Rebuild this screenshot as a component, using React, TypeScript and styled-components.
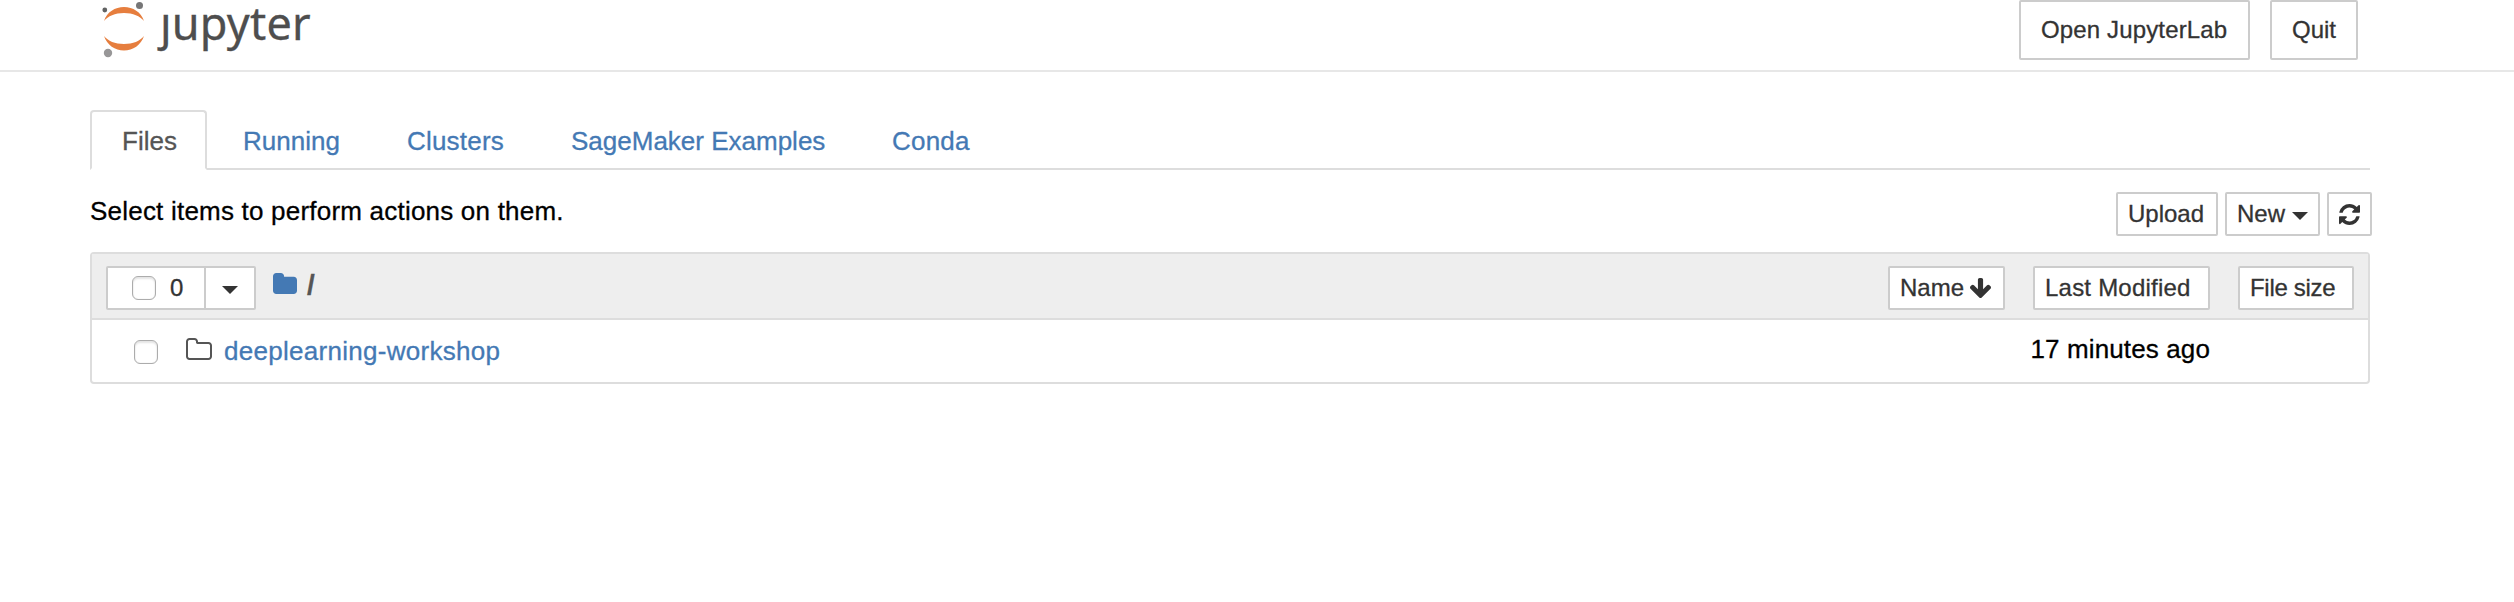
import React from "react";
import styled, { createGlobalStyle } from "styled-components";

const GlobalStyle = createGlobalStyle`
  * { box-sizing: border-box; }
  body {
    margin: 0;
    background: #fff;
    color: #000;
    font-family: "Liberation Sans", Helvetica, Arial, sans-serif;
    font-size: 26px;
    line-height: 36px;
    -webkit-text-stroke: 0.3px currentColor;
  }
  a { color: #4479b4; text-decoration: none; }
`;

const Header = styled.header`
  display: flex;
  justify-content: space-between;
  height: 72px;
  padding: 0 156px 0 102px;
  border-bottom: 2px solid #e7e7e7;
`;

const Brand = styled.a`
  display: flex;
  gap: 14px;
`;

const Wordmark = styled.span`
  font-family: "Noto Sans", "Open Sans", sans-serif;
  font-size: 45px;
  line-height: 46px;
  letter-spacing: 0.2px;
  color: #4e4e4e;
`;

const HeaderActions = styled.div`
  display: flex;
  gap: 20px;
`;

const Button = styled.button<{ $w: number; $h?: number; $track?: number }>`
  display: flex;
  align-items: center;
  flex: none;
  width: ${(p) => p.$w}px;
  height: ${(p) => p.$h ?? 44}px;
  padding: 0 0 0 10px;
  border: 2px solid #ccc;
  border-radius: 2px;
  background: #fff;
  color: #333;
  font: 24px/36px "Liberation Sans", Helvetica, Arial, sans-serif;
  letter-spacing: ${(p) => p.$track ?? 0}px;
  white-space: nowrap;
`;

const HeaderButton = styled(Button)`
  padding-left: 20px;
`;

const Main = styled.main`
  margin: 38px 144px 0 90px;
`;

const TabList = styled.nav`
  display: flex;
  gap: 4px;
  height: 60px;
  border-bottom: 2px solid #ddd;
`;

const Tab = styled.a<{ $w: number; $active?: boolean; $track?: number }>`
  width: ${(p) => p.$w}px;
  height: 60px;
  padding: 11px 0 0 30px;
  border: 2px solid ${(p) => (p.$active ? "#ddd" : "transparent")};
  border-bottom-color: ${(p) => (p.$active ? "#fff" : "transparent")};
  border-radius: 4px 4px 0 0;
  background: ${(p) => (p.$active ? "#fff" : "transparent")};
  letter-spacing: ${(p) => p.$track ?? 0}px;
  white-space: nowrap;
  && { color: ${(p) => (p.$active ? "#555" : "#4479b4")}; }
`;

const Toolbar = styled.div`
  display: flex;
  justify-content: space-between;
  height: 82px;
  margin-right: -2px;
  padding-top: 22px;
`;

const Hint = styled.span`
  margin-top: 1px;
  letter-spacing: 0.21px;
`;

const ToolbarButtons = styled.div`
  display: flex;
  gap: 7px;
`;

const Caret = styled.i<{ $gap?: number }>`
  margin: 4px 0 0 ${(p) => p.$gap ?? 0}px;
  border-top: 8px solid #333;
  border-left: 8px solid transparent;
  border-right: 8px solid transparent;
`;

const Listing = styled.section`
  border: 2px solid #ddd;
  border-radius: 4px;
`;

const ListHeader = styled.div`
  display: flex;
  justify-content: space-between;
  height: 66px;
  padding: 12px 14px 0;
  border-bottom: 2px solid #ddd;
  background: #eee;
`;

const Group = styled.div`
  display: flex;
`;

const SelectButton = styled(Button)`
  gap: 14px;
  padding-left: 24px;
  border-radius: 2px 0 0 2px;
`;

const MenuButton = styled(Button)`
  margin-left: -2px;
  padding-left: 16px;
  border-radius: 0 2px 2px 0;
`;

const Checkbox = styled.input.attrs({ type: "checkbox" })`
  appearance: none;
  flex: none;
  width: 24px;
  height: 24px;
  margin: 0;
  border: 1px solid #acacac;
  border-radius: 6px;
  background: #fff;
  box-shadow: inset 0 2px 2px #e4e4e4, inset 0 0 1px #ccc;
`;

const Breadcrumb = styled.div`
  display: flex;
  gap: 10px;
  margin-left: 17px;
  color: #555;
  font-weight: bold;
  font-size: 28px;
  line-height: 38px;
`;

const SortButtons = styled.div`
  display: flex;
  gap: 28px;
`;

const ListRow = styled.div`
  display: flex;
  height: 62px;
  padding: 0 158px 0 42px;
`;

const RowCheckbox = styled(Checkbox)`
  margin: 20px 28px 0 0;
`;

const ItemName = styled.a`
  margin: 13px auto 0 12px;
  letter-spacing: 0.28px;
`;

const Modified = styled.span`
  margin-top: 11px;
  letter-spacing: 0.12px;
`;

const Glyph = styled.svg<{ $w: number; $h: number; $top?: number; $left?: number }>`
  flex: none;
  width: ${(p) => p.$w}px;
  height: ${(p) => p.$h}px;
  margin: ${(p) => p.$top ?? 0}px 0 0 ${(p) => p.$left ?? 0}px;
  fill: currentColor;
`;

const FolderIcon = styled(Glyph)`
  color: #4479b4;
`;

const FolderOutline = styled(Glyph)`
  color: #555;
`;

const Logo = () => (
  <svg width="44" height="60" viewBox="102 0 44 60">
    <path d="M104 21C107 12 115 7 124 7s17 5 20 14c-4-5-11-8-20-8s-16 3-20 8z" fill="#e67e3e" />
    <path d="M104 36c3 9 11 14.500 20 14.500s17-5.500 20-14.500c-4 5-11 8-20 8s-16-3-20-8z" fill="#e67e3e" />
    <circle cx="139.500" cy="5.500" r="3.500" fill="#767677" />
    <circle cx="104.800" cy="10" r="2.400" fill="#616262" />
    <circle cx="108" cy="53" r="4.200" fill="#989798" />
  </svg>
);

export default function App() {
  return (
    <>
      <GlobalStyle />
      <Header>
        <Brand>
          <Logo />
          <Wordmark>ȷupyter</Wordmark>
        </Brand>
        <HeaderActions>
          <HeaderButton $w={231} $h={60} $track={0.14}>Open JupyterLab</HeaderButton>
          <HeaderButton $w={88} $h={60}>Quit</HeaderButton>
        </HeaderActions>
      </Header>
      <Main>
        <TabList>
          <Tab $w={117} $active>Files</Tab>
          <Tab $w={160}>Running</Tab>
          <Tab $w={160} $track={0.2}>Clusters</Tab>
          <Tab $w={317}>SageMaker Examples</Tab>
          <Tab $w={142} $track={0.2}>Conda</Tab>
        </TabList>
        <Toolbar>
          <Hint>Select items to perform actions on them.</Hint>
          <ToolbarButtons>
            <Button $w={102}>Upload</Button>
            <Button $w={95}>New<Caret $gap={7} /></Button>
            <Button $w={45}>
              <Glyph $w={21} $h={21} viewBox="128 128 1536 1536">
                <path d="M1639 1056q0 5-1 7-64 268-268 434.500t-478 166.500q-146 0-282.500-55t-243.500-157l-129 129q-19 19-45 19t-45-19-19-45v-448q0-26 19-45t45-19h448q26 0 45 19t19 45-19 45l-137 137q71 66 161 102t187 36q134 0 250-65t186-179q11-17 53-117 8-23 30-23h192q13 0 22.500 9.500t9.500 22.500zm25-800v448q0 26-19 45t-45 19h-448q-26 0-45-19t-19-45 19-45l138-138q-148-137-349-137-134 0-250 65t-186 179q-11 17-53 117-8 23-30 23h-199q-13 0-22.500-9.500t-9.500-22.500v-7q65-268 270-434.500t480-166.500q146 0 284 55.500t245 156.500l130-129q19-19 45-19t45 19 19 45z" />
              </Glyph>
            </Button>
          </ToolbarButtons>
        </Toolbar>
        <Listing>
          <ListHeader>
            <Group>
              <SelectButton as="div" $w={100}><Checkbox />0</SelectButton>
              <MenuButton $w={52}><Caret /></MenuButton>
              <Breadcrumb>
                <FolderIcon $w={24} $h={21} $top={7} viewBox="64 128 1664 1408" preserveAspectRatio="none">
                  <path d="M1728 608v704q0 92-66 158t-158 66h-1216q-92 0-158-66t-66-158v-960q0-92 66-158t158-66h320q92 0 158 66t66 158v32h672q92 0 158 66t66 158z" />
                </FolderIcon>
                /
              </Breadcrumb>
            </Group>
            <SortButtons>
              <Button $w={117}>
                Name
                <Glyph $w={21} $h={20} $left={6} viewBox="117 128 1558 1483">
                  <path d="M1675 832q0 53-37 90l-651 652q-39 37-91 37-53 0-90-37l-651-652q-38-36-38-90 0-53 38-91l74-75q39-37 91-37 53 0 90 37l294 294v-704q0-52 38-90t90-38h128q52 0 90 38t38 90v704l294-294q37-37 90-37 52 0 91 37l75 75q37 39 37 91z" />
                </Glyph>
              </Button>
              <Button $w={177} $track={0.22}>Last Modified</Button>
              <Button $w={116} $track={-0.3}>File size</Button>
            </SortButtons>
          </ListHeader>
          <ListRow>
            <RowCheckbox />
            <FolderOutline $w={26} $h={22} $top={18} viewBox="64 128 1664 1408" preserveAspectRatio="none">
              <path d="M1600 1312v-704q0-40-28-68t-68-28h-704q-40 0-68-28t-28-68v-64q0-40-28-68t-68-28h-320q-40 0-68 28t-28 68v960q0 40 28 68t68 28h1216q40 0 68-28t28-68zm128-704v704q0 92-66 158t-158 66h-1216q-92 0-158-66t-66-158v-960q0-92 66-158t158-66h320q92 0 158 66t66 158v32h672q92 0 158 66t66 158z" />
            </FolderOutline>
            <ItemName href="#">deeplearning-workshop</ItemName>
            <Modified>17 minutes ago</Modified>
          </ListRow>
        </Listing>
      </Main>
    </>
  );
}
